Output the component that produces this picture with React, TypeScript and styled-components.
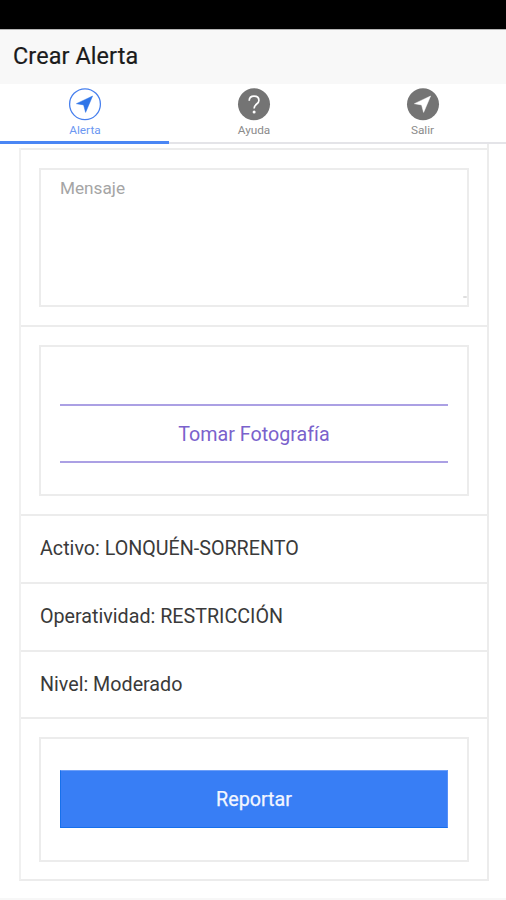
import React from "react";
import styled, { createGlobalStyle } from "styled-components";

const GlobalStyle = createGlobalStyle`
  * { box-sizing: border-box; }
  body { margin: 0; background: #fff; font-family: Roboto, sans-serif; }
`;

const LINE = "#ececec";

const Screen = styled.div`
  width: 506px;
  height: 900px;
  display: flex;
  flex-direction: column;
  overflow: hidden;
  background: #fff;
`;

const StatusBar = styled.div`
  height: 29px;
  flex: none;
  background: #000;
`;

const Header = styled.header`
  height: 55px;
  flex: none;
  padding-left: 13px;
  border-top: 1px solid #b5b5b5;
  background: #f8f8f8;
`;

const Title = styled.h1`
  margin: 0;
  font-size: 23.4px;
  font-weight: 400;
  line-height: 53px;
  letter-spacing: 0.1px;
  color: #1b1b1b;
  -webkit-text-stroke: 0.2px #1b1b1b;
`;

const Tabs = styled.nav`
  height: 60px;
  flex: none;
  display: grid;
  grid-template-columns: 169px 169px 168px;
`;

const Tab = styled.button<{ $active?: boolean }>`
  display: flex;
  flex-direction: column;
  align-items: center;
  padding: 4px 0 0 1px;
  border: 0;
  border-bottom: ${(p) => (p.$active ? "3px solid #4a86f4" : "2px solid #e4e4e8")};
  background: #fff;
  color: ${(p) => (p.$active ? "#4880ee" : "#747474")};
  font-family: inherit;

  svg {
    display: block;
    flex: none;
  }
`;

const TabLabel = styled.span<{ $gray?: boolean }>`
  margin-top: 3px;
  font-size: 11.8px;
  line-height: 13px;
  color: ${(p) => (p.$gray ? "#8b8b8b" : "#6c97f2")};
`;

const RowAbove = styled.div`
  height: 4px;
  flex: none;
  margin: 0 17px 0 19px;
  border-right: 2px solid ${LINE};
`;

const Grid = styled.main`
  flex: none;
  height: 733px;
  margin: 0 17px 0 19px;
  border: 2px solid ${LINE};
  border-top: 0;
  border-left-color: #f0f0f0;
`;

const Row = styled.section<{ $h: number }>`
  height: ${(p) => p.$h}px;
  border-top: 2px solid ${LINE};
  padding: 18px 18px 0;
`;

const TextRow = styled(Row)`
  display: flex;
  align-items: center;
  padding: 0 19px;
  line-height: 24px;
  font-size: 19.7px;
  color: #3a3a3a;
`;

const Message = styled.div`
  height: 139px;
  display: flex;
  flex-direction: column;
  justify-content: space-between;
  padding: 7px 0 7px 19px;
  border: 2px solid ${LINE};
  font-size: 17.2px;
  line-height: 22px;
  color: #a5a5a5;
`;

const Grip = styled.i`
  align-self: flex-end;
  width: 4px;
  height: 2px;
  border-radius: 1px;
  background: #dedede;
`;

const Cell = styled.div<{ $h: number; $top: number }>`
  height: ${(p) => p.$h}px;
  padding: ${(p) => p.$top}px 19px 0;
  border: 2px solid ${LINE};
`;

const PhotoButton = styled.button`
  width: 100%;
  height: 59px;
  padding: 2px 0 0;
  border: solid #aba0e4;
  border-width: 2px 0;
  background: #fff;
  font-family: inherit;
  font-size: 19.7px;
  color: #7a62cc;
`;

const ReportButton = styled.button`
  width: 100%;
  height: 58px;
  padding: 0;
  border: 1px solid #1670ec;
  border-top-color: #6d9ff8;
  border-right-color: #5790f8;
  background: #387ef5;
  font-family: inherit;
  font-size: 19.7px;
  color: #f2f6ff;
  -webkit-text-stroke: 0.25px #f2f6ff;
`;

const BottomEdge = styled.div`
  flex: none;
  height: 2px;
  margin-top: 17px;
  background: #f7f7f7;
`;

const ARROW = "M24.6 8 8.4 15.7 15.6 16.9 17.6 24.4Z";

function Arrow({ outline }: { outline?: boolean }) {
  return (
    <svg width="34" height="33" viewBox="0 0 34 33">
      {outline ? (
        <circle cx="17" cy="16.2" r="15.4" fill="none" stroke="currentColor" strokeWidth="1.3" />
      ) : (
        <circle cx="17" cy="16.2" r="16" fill="currentColor" />
      )}
      <path
        d={ARROW}
        fill={outline ? "#2f75e8" : "#fff"}
        stroke={outline ? "#2f75e8" : "#fff"}
        strokeWidth="0.5"
      />
    </svg>
  );
}

function Help() {
  return (
    <svg width="34" height="33" viewBox="0 0 34 33">
      <circle cx="17" cy="16.2" r="16" fill="currentColor" />
      <path
        d="M12.2 12.8C12.3 9.7 14.1 8.2 17 8.2s4.9 1.5 4.9 4.2c0 3.7-4.8 3.6-4.8 8"
        fill="none"
        stroke="#fff"
        strokeWidth="1.7"
      />
      <circle cx="17.1" cy="23.9" r="1.5" fill="#fff" />
    </svg>
  );
}

export default function App() {
  return (
    <Screen>
      <GlobalStyle />
      <StatusBar />
      <Header>
        <Title>Crear Alerta</Title>
      </Header>
      <Tabs>
        <Tab $active>
          <Arrow outline />
          <TabLabel>Alerta</TabLabel>
        </Tab>
        <Tab>
          <Help />
          <TabLabel $gray>Ayuda</TabLabel>
        </Tab>
        <Tab>
          <Arrow />
          <TabLabel $gray>Salir</TabLabel>
        </Tab>
      </Tabs>
      <RowAbove />
      <Grid>
        <Row $h={177}>
          <Message>
            Mensaje
            <Grip />
          </Message>
        </Row>
        <Row $h={189}>
          <Cell $h={151} $top={57}>
            <PhotoButton>Tomar Fotografía</PhotoButton>
          </Cell>
        </Row>
        <TextRow $h={68}>Activo: LONQUÉN-SORRENTO</TextRow>
        <TextRow $h={68}>Operatividad: RESTRICCIÓN</TextRow>
        <TextRow $h={67}>Nivel: Moderado</TextRow>
        <Row $h={162}>
          <Cell $h={125} $top={31}>
            <ReportButton>Reportar</ReportButton>
          </Cell>
        </Row>
      </Grid>
      <BottomEdge />
    </Screen>
  );
}
